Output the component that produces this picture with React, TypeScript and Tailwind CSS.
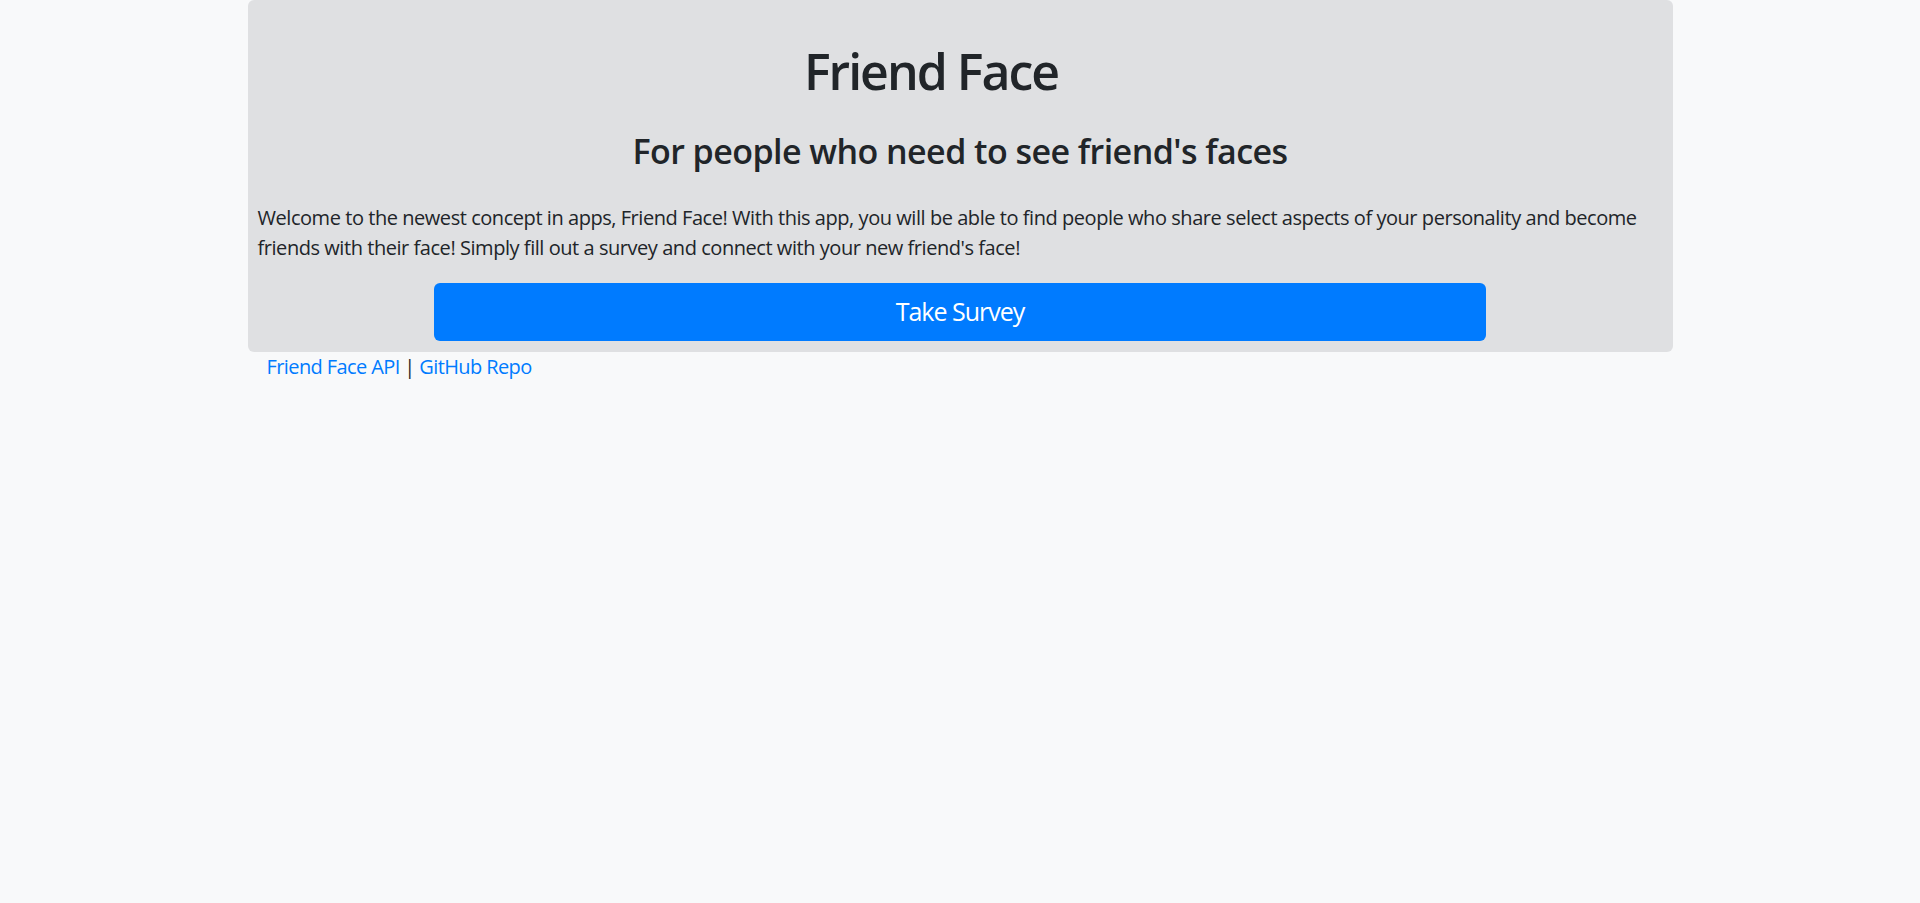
export default function App() {
  return (
    <div className="min-h-screen bg-[#f8f9fa] text-[#212529] font-['Segoe_UI','Open_Sans',sans-serif]">
      <div className="mx-auto w-[1425px]">
        {/* Jumbotron */}
        <div className="rounded-[6px] bg-[#dfe0e2] px-[10px] pt-[41px] pb-[11px]">
          <h1 className="pr-[58px] text-center text-[50px] font-semibold leading-[60px] tracking-[-2px]">Friend Face</h1>
          <h3 className="mt-[29px] text-center text-[34px] font-semibold leading-[42px] tracking-[-0.55px]">
            For people who need to see friend's faces
          </h3>
          <p className="mt-[31px] text-[20px] leading-[30px] tracking-[-0.45px]">
            Welcome to the newest concept in apps, Friend Face! With this app, you will be able to find people who share
            select aspects of your personality and become friends with their face! Simply fill out a survey and connect
            with your new friend's face!
          </p>
          <button className="mx-auto mt-[20px] block h-[58px] w-[1052px] rounded-[6px] bg-[#007bff] text-[25px] tracking-[-1px] text-white">
            Take Survey
          </button>
        </div>

        <p className="pl-[19px] text-[20px] leading-[30px] tracking-[-0.6px]">
          <a href="#" className="text-[#007bff]">Friend Face API</a> | <a href="#" className="text-[#007bff]">GitHub Repo</a>
        </p>
      </div>
    </div>
  )
}
